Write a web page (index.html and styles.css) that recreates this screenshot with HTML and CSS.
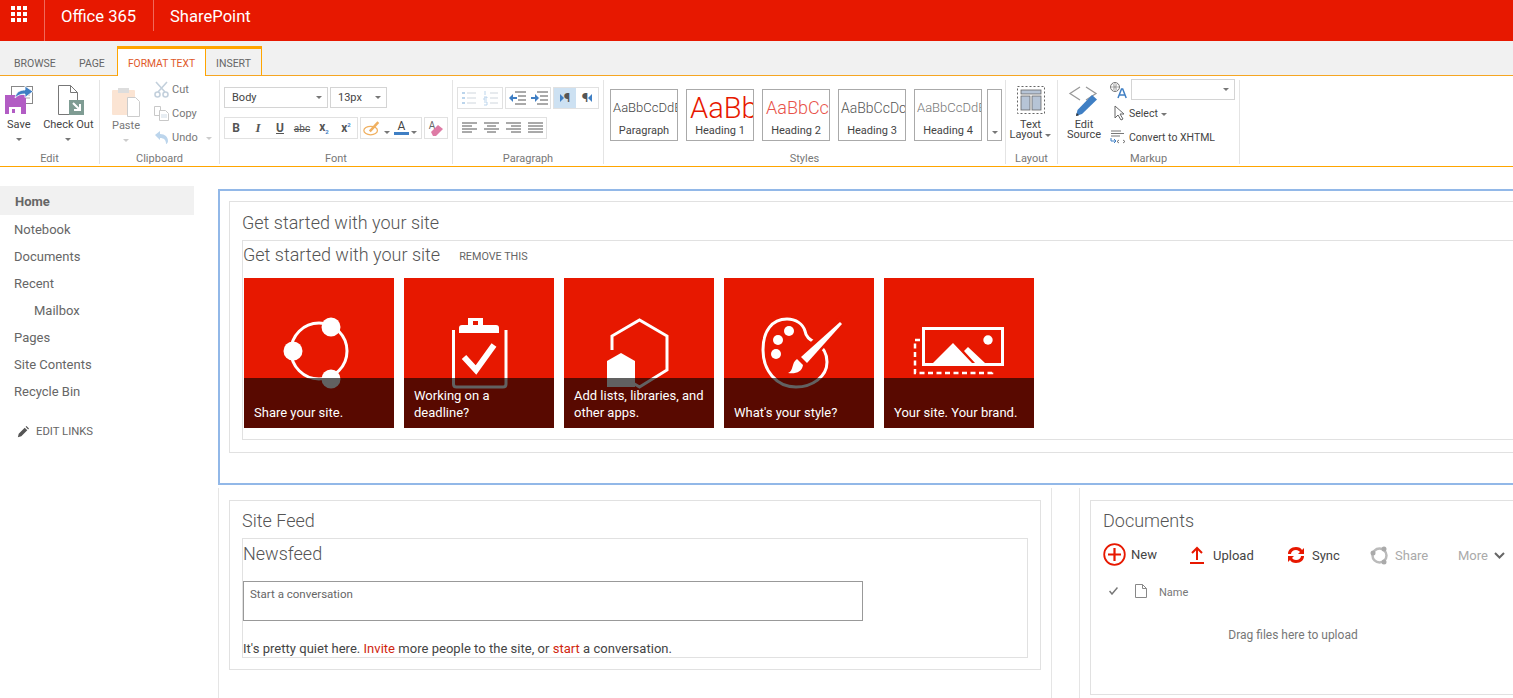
FILE: index.html
```html
<!DOCTYPE html>
<html lang="en">
<head>
    <meta charset="UTF-8">
    <title>Home - Site</title>
    <link rel="stylesheet" href="styles.css">
</head>
<body>
<header class="suite">
    <div class="waffle">
        <svg width="16" height="16" viewBox="0 0 16 16" fill="#fff"><rect x="0" y="0" width="4" height="4"/><rect x="6" y="0" width="4" height="4"/><rect x="12" y="0" width="4" height="4"/><rect x="0" y="6" width="4" height="4"/><rect x="6" y="6" width="4" height="4"/><rect x="12" y="6" width="4" height="4"/><rect x="0" y="12" width="4" height="4"/><rect x="6" y="12" width="4" height="4"/><rect x="12" y="12" width="4" height="4"/></svg>
    </div>
    <div class="suite-item office">Office 365</div>
    <div class="suite-item product">SharePoint</div>
</header>

<nav class="tabs">
    <span class="tab browse">BROWSE</span>
    <span class="tab page-tab">PAGE</span>
    <span class="tab active">FORMAT TEXT</span>
    <span class="tab insert">INSERT</span>
</nav>

<section class="ribbon">
    <div class="group g-edit">
        <div class="group-body">
            <div class="big save">
                <svg width="30" height="30" viewBox="0 0 30 30"><rect x="6.500" y="1.500" width="21" height="17" fill="#fff" stroke="#888"/><path d="M20 7h5M20 10h5M20 13h5" stroke="#aaa"/><path d="M0 10h21v19H0z" fill="#b25cc4"/><rect x="4" y="22" width="12" height="7" fill="#fff"/><rect x="7" y="24" width="3" height="4" fill="#b25cc4"/><path d="M10 13c1-6 5-8 10-8V1l8 5.500-8 6V9c-4 0-7 1-10 4z" fill="#3f7fc4" stroke="#fff" stroke-width=".8"/></svg>
                <span>Save</span><i class="caret"></i>
            </div>
            <div class="big checkout">
                <svg width="28" height="31" viewBox="0 0 28 31"><path d="M1.500 .5h12l7 7v22h-19z" fill="#fff" stroke="#777"/><path d="M13.500 .5v7h7" fill="none" stroke="#777"/><rect x="12" y="15" width="15" height="15" fill="#7f9c93"/><path d="M16 18l7 7M23 19v6h-6" fill="none" stroke="#fff" stroke-width="2"/></svg>
                <span>Check Out</span><i class="caret"></i>
            </div>
        </div>
        <div class="group-label">Edit</div>
    </div>

    <div class="group g-clip">
        <div class="group-body">
            <div class="big paste off">
                <svg width="29" height="32" viewBox="0 0 29 32"><rect x="0" y="4" width="23" height="25" rx="1" fill="#fbe4d3"/><rect x="6" y="2" width="11" height="5" fill="#ddd"/><path d="M15.500 11.500h8l4 4v15h-12z" fill="#fff" stroke="#ccc"/></svg>
                <span>Paste</span><i class="caret"></i>
            </div>
            <div class="small-stack off">
                <div class="small-row"><svg width="15" height="17" viewBox="0 0 15 17" fill="none" stroke="#c3d0dc" stroke-width="1.600"><path d="M2 1l9 10M13 1L4 11"/><circle cx="3.500" cy="13.500" r="2.500"/><circle cx="11.500" cy="13.500" r="2.500"/></svg><span>Cut</span></div>
                <div class="small-row"><svg width="15" height="15" viewBox="0 0 15 15" fill="#fff" stroke="#c8c8c8"><path d="M.5 .5h6v9h-6z"/><path d="M5.500 4.500h6l3 3v7h-9z"/><path d="M7 9h6M7 11h6" stroke="#cfdbe6"/></svg><span>Copy</span></div>
                <div class="small-row"><svg width="15" height="15" viewBox="0 0 15 15"><path d="M1 5l5-4v3c5 0 8 3 8 7 0 1-1 3-2 3 0-4-2-6-6-6v2z" fill="#bcd5ec"/></svg><span>Undo</span><i class="caret light"></i></div>
            </div>
        </div>
        <div class="group-label">Clipboard</div>
    </div>

    <div class="group g-font">
        <div class="rows">
            <div class="tool-row">
                <div class="select sel-style">Body<i class="caret"></i></div>
                <div class="select sel-size">13px<i class="caret"></i></div>
            </div>
            <div class="tool-row">
                <div class="tool-box w134">
                    <b class="fmt">B</b><i class="fmt serif">I</i><u class="fmt">U</u><s class="fmt abc">abc</s>
                    <span class="fmt">x<sub>2</sub></span><span class="fmt">x<sup>2</sup></span>
                </div>
                <div class="tool-box w62">
                    <svg width="22" height="18" viewBox="0 0 22 18" fill="none"><ellipse cx="9" cy="12" rx="8" ry="5" stroke="#f0b060" stroke-width="1.500"/><path d="M8 13L18 2" stroke="#f0b060" stroke-width="3"/></svg><i class="caret tiny"></i>
                    <span class="font-color">A</span><i class="caret tiny"></i>
                </div>
                <div class="tool-box w24">
                    <span class="erase-a">A</span>
                    <svg class="eraser" width="14" height="12" viewBox="0 0 14 12"><path d="M1 8l7-7 5 4-7 7H3z" fill="#de7ba5"/></svg>
                </div>
            </div>
        </div>
        <div class="group-label">Font</div>
    </div>

    <div class="group g-para">
        <div class="rows">
            <div class="tool-row">
                <div class="tool-box w46 off2">
                    <svg width="16" height="16" viewBox="0 0 16 16" fill="none" stroke="#cfd6dd"><path d="M6 3h9M6 8h9M6 13h9"/><path d="M1 3h3M1 8h3M1 13h3" stroke="#bcd5ec" stroke-width="2"/></svg>
                    <svg width="16" height="16" viewBox="0 0 16 16" fill="none" stroke="#cfd6dd"><path d="M7 3h8M7 8h8M7 13h8"/><path d="M2 1v4M1 7h3v1H1v2h3M1 12h3v3H1" stroke="#bcd5ec"/></svg>
                </div>
                <div class="tool-box w46">
                    <svg width="17" height="14" viewBox="0 0 17 14"><path d="M6 1h11M9 5h8M9 9h8M6 13h11" stroke="#555"/><path d="M0 7l4-4v3h4v2H4v3z" fill="#3f7fc4"/></svg>
                    <svg width="17" height="14" viewBox="0 0 17 14"><path d="M6 1h11M9 5h8M9 9h8M6 13h11" stroke="#555"/><path d="M8 7L4 3v3H0v2h4v3z" fill="#3f7fc4"/></svg>
                </div>
                <div class="tool-box w46 dir">
                    <span class="dir-btn on"><em class="tri-r"></em>¶</span>
                    <span class="dir-btn">¶<em class="tri-l"></em></span>
                </div>
            </div>
            <div class="tool-row">
                <div class="tool-box w90">
                    <svg class="align" width="15" height="12" viewBox="0 0 15 12"><path d="M0 1h15M0 4h10M0 7h15M0 10h10"/></svg>
                    <svg class="align" width="15" height="12" viewBox="0 0 15 12"><path d="M0 1h15M3 4h9M0 7h15M3 10h9"/></svg>
                    <svg class="align" width="15" height="12" viewBox="0 0 15 12"><path d="M0 1h15M5 4h10M0 7h15M5 10h10"/></svg>
                    <svg class="align" width="15" height="12" viewBox="0 0 15 12"><path d="M0 1h15M0 4h15M0 7h15M0 10h15"/></svg>
                </div>
            </div>
        </div>
        <div class="group-label">Paragraph</div>
    </div>

    <div class="group g-styles">
        <div class="style-list">
            <div class="style-card"><div class="sample s-para">AaBbCcDdE</div><div class="style-name">Paragraph</div></div>
            <div class="style-card"><div class="sample s-h1">AaBb</div><div class="style-name">Heading 1</div></div>
            <div class="style-card"><div class="sample s-h2">AaBbCc</div><div class="style-name">Heading 2</div></div>
            <div class="style-card"><div class="sample s-h3">AaBbCcDc</div><div class="style-name">Heading 3</div></div>
            <div class="style-card"><div class="sample s-h4">AaBbCcDdE</div><div class="style-name">Heading 4</div></div>
            <div class="style-more"><i class="caret"></i></div>
        </div>
        <div class="group-label">Styles</div>
    </div>

    <div class="group g-layout">
        <div class="group-body center">
            <div class="big layout">
                <svg width="28" height="28" viewBox="0 0 28 28"><rect x=".5" y=".5" width="27" height="27" fill="none" stroke="#666" stroke-dasharray="2 2"/><rect x="4" y="4" width="20" height="4" fill="#b6c4d6" stroke="#666" stroke-width=".8"/><rect x="4" y="10" width="9" height="14" fill="#b6c4d6" stroke="#666" stroke-width=".8"/><rect x="15" y="10" width="9" height="14" fill="#b6c4d6" stroke="#666" stroke-width=".8"/></svg>
                <span class="two-line">Text<br>Layout<i class="caret inline"></i></span>
            </div>
        </div>
        <div class="group-label">Layout</div>
    </div>

    <div class="group g-markup">
        <div class="group-body">
            <div class="big source">
                <svg width="32" height="32" viewBox="0 0 32 32" fill="none"><path d="M12 2L2 8.500l10 6.500M18 2l10 6.500-10 6.500" stroke="#999" stroke-width="1.300"/><path d="M8 31l1.500-6L24 10l5 4.500L14 29z" fill="#3f7fc4"/><path d="M8 31l.7-3 2.300 2.200z" fill="#333"/></svg>
                <span class="two-line">Edit<br>Source</span>
            </div>
            <div class="markup-stack">
                <div class="markup-row first">
                    <svg width="18" height="18" viewBox="0 0 18 18" fill="none"><circle cx="6" cy="6" r="4.500" stroke="#777"/><path d="M1.500 6h9M6 1.500v9M3.500 2.500c2 2 2 5 0 7M8.500 2.500c-2 2-2 5 0 7" stroke="#777" stroke-width=".6"/><path d="M9 17l3.500-9h1.200l3.500 9M10.500 14h5.200" stroke="#3f7fc4" stroke-width="1.500"/></svg>
                    <div class="select sel-lang"><i class="caret"></i></div>
                </div>
                <div class="markup-row second">
                    <svg width="12" height="16" viewBox="0 0 12 16"><path d="M1 1v12l3-3 3 5 2-1-3-5h4z" fill="#fff" stroke="#666"/></svg>
                    <span>Select<i class="caret inline"></i></span>
                </div>
                <div class="markup-row third">
                    <svg width="16" height="15" viewBox="0 0 16 15" fill="none"><path d="M1 1h10M1 3.500h13M1 6h9" stroke="#777"/><path d="M1 8v3h5M4 9l2 2-2 2" stroke="#3f7fc4"/><path d="M9 10l-2 1.500L9 13M13 10l2 1.500-2 1.500" stroke="#555" stroke-width=".8"/></svg>
                    <span>Convert to XHTML</span>
                </div>
            </div>
        </div>
        <div class="group-label">Markup</div>
    </div>
</section>

<div class="page">
    <aside class="sidenav">
        <a class="nav-item current">Home</a>
        <a class="nav-item">Notebook</a>
        <a class="nav-item">Documents</a>
        <a class="nav-item">Recent</a>
        <a class="nav-item sub">Mailbox</a>
        <a class="nav-item">Pages</a>
        <a class="nav-item">Site Contents</a>
        <a class="nav-item">Recycle Bin</a>
        <a class="edit-links">
            <svg width="12" height="12" viewBox="0 0 14 14"><path d="M1 13l1-4 7-7 3 3-7 7zM10 1l1-1 3 3-1 1z" fill="#555"/></svg>
            EDIT LINKS
        </a>
    </aside>

    <main class="content">
        <section class="zone-top">
            <div class="webpart top-part">
                <h2 class="wp-title">Get started with your site</h2>
                <div class="inner-part">
                    <div class="gs-head">
                        <h2 class="gs-title">Get started with your site</h2>
                        <span class="remove">REMOVE THIS</span>
                    </div>
                    <div class="tiles">
                        <div class="tile">
                            <svg class="tile-art" viewBox="0 0 150 150"><circle cx="75" cy="73" r="28" fill="none" stroke="#fff" stroke-width="3"/><circle cx="87" cy="49" r="9.500" fill="#fff"/><circle cx="49" cy="73" r="9.500" fill="#fff"/><circle cx="87" cy="101" r="9.500" fill="#fff"/></svg>
                            <div class="caption">Share your site.</div>
                        </div>
                        <div class="tile">
                            <svg class="tile-art" viewBox="0 0 150 150"><path d="M49.500 52V106q0 3 3 3H99q3 0 3-3V52" fill="none" stroke="#fff" stroke-width="3"/><path d="M55 55v-5q0-3 3-3h6v-7h15v7h13q3 0 3 3v5z" fill="#fff"/><rect x="69" y="43" width="5" height="4" fill="#e71800"/><path d="M60 79l12 13 18-25" fill="none" stroke="#fff" stroke-width="6"/></svg>
                            <div class="caption">Working on a deadline?</div>
                        </div>
                        <div class="tile">
                            <svg class="tile-art" viewBox="0 0 150 150"><path d="M48 72V58l27.500-16L103 58v34l-27.500 17-10-6" fill="none" stroke="#fff" stroke-width="3"/><path d="M57 75l14 8v26H43V83z" fill="#fff"/></svg>
                            <div class="caption">Add lists, libraries, and other apps.</div>
                        </div>
                        <div class="tile">
                            <svg class="tile-art" viewBox="0 0 150 150"><path d="M63 41C72 41 79 46 81 53 82 60 87 62 92 65 99 69 103 75 103 84 103 99 88 109 72 109 52 109 39 92 39 72 39 53 48 41 63 41z" fill="#e71800" stroke="#fff" stroke-width="3"/><circle cx="65" cy="53" r="5" fill="#fff"/><circle cx="54" cy="62" r="5" fill="#fff"/><circle cx="52" cy="76" r="5" fill="#fff"/><path d="M115 42l3 4-35 39-8-7z" fill="#e71800" stroke="#e71800" stroke-width="5"/><path d="M116 44l2 2-35 39-6-6z" fill="#fff"/><path d="M64 95c6-2 3-10 9-14l6 6c-1 7-7 9-15 8z" fill="#fff"/></svg>
                            <div class="caption">What's your style?</div>
                        </div>
                        <div class="tile">
                            <svg class="tile-art" viewBox="0 0 150 150"><rect x="39.500" y="50.500" width="79" height="36" fill="none" stroke="#fff" stroke-width="3"/><circle cx="104" cy="62" r="4.700" fill="#fff"/><path d="M49 85l20-20 19 20zM84 69l17 16H91L80 73z" fill="#fff"/><path d="M36 62h-5v33h77v-3" fill="none" stroke="#fff" stroke-width="2.500" stroke-dasharray="5 3.500"/></svg>
                            <div class="caption">Your site. Your brand.</div>
                        </div>
                    </div>
                </div>
            </div>
        </section>

        <div class="zones-bottom">
            <section class="zone-left">
                <div class="webpart feed-part">
                    <h2 class="wp-title feed-title">Site Feed</h2>
                    <div class="inner-part feed-inner">
                        <h2 class="gs-title newsfeed">Newsfeed</h2>
                        <div class="convo">Start a conversation</div>
                        <p class="quiet">It's pretty quiet here. <a>Invite</a> more people to the site, or <a>start</a> a conversation.</p>
                    </div>
                </div>
            </section>
            <section class="zone-right">
                <div class="webpart docs-part">
                    <h2 class="wp-title docs-title">Documents</h2>
                    <div class="doc-actions">
                        <span class="doc-act act-new">
                            <svg width="23" height="23" viewBox="0 0 23 23" fill="none" stroke="#e71800"><circle cx="11.500" cy="11.500" r="10.300" stroke-width="1.800"/><path d="M11.500 5v13M5 11.500h13" stroke-width="2.200"/></svg>New
                        </span>
                        <span class="doc-act act-upload">
                            <svg width="14" height="18" viewBox="0 0 14 18" fill="none" stroke="#e71800" stroke-width="2"><path d="M7 14V2M2 7l5-5 5 5"/><path d="M0 17h14"/></svg>Upload
                        </span>
                        <span class="doc-act act-sync">
                            <svg width="18" height="18" viewBox="0 0 18 18" fill="#e71800"><path d="M1 8c0-4 3-7 8-7 3 0 5 1 6 3l2-2v6h-6l2-2c-1-1-2-2-4-2-3 0-5 2-5 4z"/><path d="M17 10c0 4-3 7-8 7-3 0-5-1-6-3l-2 2v-6h6l-2 2c1 1 2 2 4 2 3 0 5-2 5-4z"/></svg>Sync
                        </span>
                        <span class="doc-act act-share">
                            <svg width="19" height="19" viewBox="0 0 19 19" fill="none"><circle cx="9.500" cy="9.500" r="7" stroke="#bbb" stroke-width="2.500"/><circle cx="14" cy="3" r="2.500" fill="#aaa"/><circle cx="3" cy="7" r="2.500" fill="#aaa"/><circle cx="14" cy="16" r="2.500" fill="#aaa"/></svg>Share
                        </span>
                        <span class="doc-act act-more">More
                            <svg width="11" height="7" viewBox="0 0 11 7" fill="none" stroke="#666" stroke-width="2"><path d="M1 1l4.500 4.500L10 1"/></svg>
                        </span>
                    </div>
                    <div class="doc-head">
                        <svg width="9" height="8" viewBox="0 0 9 8" fill="none" stroke="#777" stroke-width="1.500"><path d="M.5 4l2.500 3L8.500 .5"/></svg>
                        <svg class="doc-icon" width="12" height="14" viewBox="0 0 12 14" fill="#fff" stroke="#888"><path d="M.5 .5h7l4 4v9h-11z"/><path d="M7.500 .5v4h4" fill="none"/></svg>
                        <span class="doc-name">Name</span>
                    </div>
                    <div class="drag">Drag files here to upload</div>
                </div>
            </section>
        </div>
    </main>
</div>
</body>
</html>
```

FILE: styles.css
```css
* {
    box-sizing: border-box;
}
html, body {
    margin: 0;
    height: 100%;
}
body {
    font-family: Roboto, "Open Sans", sans-serif;
    font-size: 13px;
    color: #444;
    background: #fff;
    overflow: hidden;
}
h2, p {
    margin: 0;
    font-weight: 300;
}

/* suite bar */
.suite {
    display: flex;
    height: 41px;
    background: #e71800;
    color: #fff;
}
.waffle {
    width: 45px;
    padding: 6px 0 0 11px;
    border-right: 1px solid #f0695a;
}
.suite-item {
    font-size: 16.600px;
    line-height: 33px;
    padding: 0 16px;
    height: 31px;
}
.office {
    width: 109px;
    border-right: 1px solid #f0695a;
}

/* tabs */
.tabs {
    display: flex;
    align-items: flex-end;
    height: 35px;
    background: #f1f1f1;
    border-bottom: 1px solid #f5a623;
}
.tab {
    height: 30px;
    line-height: 38px;
    font-size: 10.500px;
    color: #666;
    padding: 0 11px;
}
.browse {
    padding-left: 14px;
    width: 68px;
}
.page-tab {
    width: 49px;
}
.tab.active {
    width: 89px;
    padding: 0;
    text-align: center;
    font-size: 10.300px;
    color: #e0592a;
    background: #fff;
    border: 1px solid #ffa500;
    border-top-width: 3px;
    border-bottom: 0;
    line-height: 30px;
    position: relative;
    margin-bottom: -1px;
    height: 30px;
}
.tab.insert {
    width: 56px;
    height: 29px;
    padding: 0;
    text-align: center;
    border-right: 1px solid #ffa500;
    border-top: 3px solid #ffa500;
    line-height: 30px;
}

/* ribbon */
.ribbon {
    display: flex;
    height: 91px;
    padding-top: 4px;
    border-bottom: 1px solid #ffa500;
    font-size: 11px;
}
.group {
    display: flex;
    flex-direction: column;
    border-right: 1px solid #e4e4e4;
    height: 84px;
}
.group-body {
    display: flex;
    flex: 1;
    min-height: 0;
}
.group-label {
    flex: none;
    text-align: center;
    color: #777;
    font-size: 11px;
    line-height: 14px;
    height: 12px;
}
.g-edit { width: 100px; }
.g-clip { width: 120px; }
.g-font { width: 233px; }
.g-para { width: 151px; }
.g-styles { width: 402px; }
.g-layout { width: 52px; }
.g-markup { width: 182px; }

.big {
    display: flex;
    flex-direction: column;
    align-items: center;
    text-align: center;
    line-height: 10px;
}
.big span {
    margin: 5px 0 8px;
}
.save {
    width: 38px;
    padding-top: 5px;
}
.save svg {
    margin-left: 3px;
}
.checkout {
    width: 62px;
    padding-top: 5px;
}
.checkout svg {
    margin-left: 6px;
}
.checkout span {
    margin-top: 4px;
}
.caret {
    display: inline-block;
    width: 0;
    height: 0;
    border: 3px solid transparent;
    border-top: 3px solid #777;
    border-bottom: 0;
}
.caret.light {
    border-top-color: #ccc;
    margin-left: 5px;
    margin-top: 3px;
}
.caret.tiny {
    margin: 8px 4px 0 2px;
}
.caret.inline {
    margin-left: 3px;
    vertical-align: 1px;
}
.off {
    color: #777;
}
.paste {
    width: 50px;
    margin-left: 1px;
    padding: 6px 0 0 0;
}
.paste .caret {
    border-top-color: #ccc;
}
.paste span {
    margin-top: 3px;
}
.small-stack {
    margin-top: -3px;
    padding-left: 3px;
}
.small-row {
    display: flex;
    align-items: center;
    gap: 3px;
    height: 24px;
}
.small-row svg {
    flex: none;
}

/* font and paragraph tools */
.rows {
    display: flex;
    flex-direction: column;
    flex: 1;
    min-height: 0;
    gap: 8px;
    padding: 7px 0 0 4px;
}
.tool-row {
    display: flex;
    gap: 2px;
    height: 22px;
}
.select {
    display: flex;
    align-items: center;
    justify-content: space-between;
    height: 21px;
    padding: 0 5px 0 7px;
    border: 1px solid #d4d4d4;
    font-size: 11px;
    color: #444;
}
.sel-style { width: 104px; }
.sel-size { width: 57px; }
.tool-box {
    display: flex;
    align-items: center;
    justify-content: space-around;
    height: 22px;
    border: 1px solid #e1e1e1;
}
.w134 { width: 134px; }
.w62 { width: 62px; justify-content: flex-start; padding-left: 2px; }
.w24 { width: 24px; position: relative; }
.w46 { width: 46px; }
.w90 { width: 90px; }
.fmt {
    font-size: 12px;
    font-weight: 700;
    color: #555;
    width: 22px;
    text-align: center;
}
.fmt.serif {
    font-family: "Liberation Serif", serif;
    font-size: 13px;
}
.fmt.abc {
    font-size: 10px;
    font-weight: 400;
}
.fmt sub, .fmt sup {
    font-size: 6px;
    color: #3f7fc4;
}
.font-color {
    width: 18px;
    font-size: 12px;
    line-height: 11px;
    text-align: center;
    border-bottom: 3px solid #3f7fc4;
    color: #444;
}
.erase-a {
    font-size: 10px;
    color: #666;
    margin: -5px 0 0 -8px;
}
.eraser {
    position: absolute;
    right: 3px;
    top: 6px;
}
.align {
    stroke: #555;
    stroke-width: 1;
    fill: none;
}
.dir {
    padding: 0;
    justify-content: flex-start;
}
.dir-btn {
    flex: 1;
    height: 100%;
    text-align: center;
    font-size: 13px;
    font-weight: 700;
    line-height: 20px;
    color: #555;
}
.dir-btn.on {
    background: #cde1f2;
}
.tri-r, .tri-l {
    display: inline-block;
    width: 0;
    height: 0;
    border: 4px solid transparent;
    vertical-align: 0;
}
.tri-r {
    border-left-color: #3f7fc4;
    border-right: 0;
}
.tri-l {
    border-right-color: #3f7fc4;
    border-left: 0;
}

/* style gallery */
.style-list {
    display: flex;
    flex: 1;
    min-height: 0;
    gap: 8px;
    padding: 9px 0 0 6px;
    align-items: flex-start;
}
.style-card {
    width: 68px;
    height: 52px;
    border: 1px solid #aaa;
    overflow: hidden;
    text-align: center;
}
.sample {
    height: 32px;
    line-height: 36px;
    white-space: nowrap;
    font-weight: 300;
    text-align: left;
    padding-left: 2px;
    font-size: 13px;
}
.s-h1 { font-size: 29px; color: #e71800; line-height: 36px; padding-left: 3px; }
.s-h2 { font-size: 18px; color: #e8524a; padding-left: 3px; }
.s-h3 { font-size: 14px; color: #555; }
.s-h4 { font-size: 13px; color: #777; }
.style-name {
    font-size: 11px;
    line-height: 14px;
    margin-top: 2px;
}
.style-more {
    display: flex;
    align-items: flex-end;
    justify-content: center;
    width: 15px;
    height: 52px;
    margin-left: -3px;
    padding-bottom: 6px;
    border: 1px solid #aaa;
}

/* layout and markup */
.g-layout .big {
    width: 100%;
    padding: 6px 2px 0 0;
}
.g-layout .big span {
    margin-top: 6px;
}
.two-line {
    line-height: 10px;
}
.source {
    width: 50px;
    margin-left: 1px;
    padding-top: 5px;
}
.source .two-line {
    margin-top: 3px;
}
.markup-row {
    display: flex;
    align-items: center;
    gap: 4px;
    font-size: 10.500px;
}
.first {
    gap: 4px;
    height: 21px;
    margin-top: -1px;
}
.second {
    gap: 3px;
    margin: 4px 0 0 5px;
    height: 18px;
}
.third {
    gap: 3px;
    margin: 6px 0 0 1px;
    height: 18px;
}
.sel-lang {
    width: 104px;
    justify-content: flex-end;
}

/* page */
.page {
    display: flex;
}
.sidenav {
    flex: none;
    width: 218px;
    padding-top: 19px;
}
.nav-item {
    display: block;
    height: 27px;
    line-height: 28px;
    padding-left: 14px;
    width: 194px;
    color: #666;
}
.nav-item.current {
    height: 29px;
    line-height: 32px;
    padding-left: 15px;
    background: #f1f1f1;
    font-weight: 700;
    margin-bottom: 1px;
}
.nav-item.sub {
    padding-left: 34px;
}
.edit-links {
    display: flex;
    align-items: center;
    gap: 7px;
    margin: 20px 0 0 17px;
    font-size: 11.300px;
    color: #666;
}
.content {
    flex: 1;
    min-width: 0;
    padding-top: 22px;
}
.zone-top {
    height: 296px;
    margin-right: -20px;
    padding: 10px 0 0 9px;
    border: 2px solid #92b8e8;
}
.webpart {
    border: 1px solid #e1e1e1;
}
.top-part {
    height: 252px;
    padding: 9px 0 0 12px;
}
.wp-title {
    font-size: 18px;
    line-height: 24px;
    color: #555;
}
.inner-part {
    border: 1px solid #e1e1e1;
    border-right: 0;
    margin-top: 5px;
}
.gs-head {
    display: flex;
    align-items: flex-start;
    height: 37px;
}
.gs-title {
    font-size: 18px;
    line-height: 28px;
    color: #555;
}
.remove {
    margin: 9px 0 0 19px;
    line-height: 14px;
    font-size: 10.800px;
    color: #666;
}
.tiles {
    display: flex;
    gap: 10px;
    padding: 0 0 11px 1px;
}
.tile {
    position: relative;
    width: 150px;
    height: 150px;
    background: #e71800;
    color: #fff;
}
.tile-art {
    display: block;
    width: 150px;
    height: 150px;
}
.caption {
    position: absolute;
    left: 0;
    right: 0;
    bottom: 0;
    display: flex;
    align-items: flex-end;
    height: 50px;
    padding: 0 10px 7px;
    line-height: 17px;
    background: rgba(0, 0, 0, 0.62);
}

/* bottom zones */
.zones-bottom {
    display: flex;
    margin-top: 3px;
    height: 211px;
}
.zone-left {
    width: 834px;
    padding: 12px 10px 0;
    border-left: 1px solid #e5e5e5;
    border-right: 1px solid #e5e5e5;
}
.feed-part {
    height: 170px;
    padding: 8px 12px 0;
}
.feed-inner {
    height: 120px;
    border-right: 1px solid #e1e1e1;
}
.newsfeed {
    line-height: 30px;
}
.convo {
    width: 620px;
    height: 40px;
    margin-top: 12px;
    padding: 5px 6px;
    font-size: 11.500px;
    line-height: 14px;
    border: 1px solid #999;
    color: #666;
}
.quiet {
    margin-top: 19px;
    font-weight: 400;
    line-height: 17px;
    letter-spacing: .03px;
}
.quiet a {
    color: #d0260f;
}
.zone-right {
    flex: 1;
    margin-left: 27px;
    margin-right: -20px;
    padding: 12px 0 0 10px;
    border-left: 1px solid #e5e5e5;
}
.docs-part {
    height: 195px;
    padding: 8px 12px 0;
}
.doc-actions {
    display: flex;
    height: 24px;
    margin-top: 9px;
    align-items: center;
}
.doc-act {
    display: flex;
    align-items: center;
    white-space: nowrap;
}
.act-new { width: 87px; gap: 5px; }
.act-upload { width: 97px; gap: 9px; margin-top: 2px; }
.act-sync { width: 83px; gap: 7px; margin-top: 2px; }
.act-share { width: 88px; gap: 6px; margin-top: 2px; color: #aaa; }
.act-more { gap: 6px; margin-top: 2px; color: #aaa; }
.doc-head {
    display: flex;
    align-items: center;
    margin: 16px 0 0 6px;
    font-size: 11px;
    color: #777;
}
.doc-icon {
    margin: 0 12px 0 17px;
}
.doc-name {
    padding-top: 4px;
}
.drag {
    margin-top: 29px;
    width: 380px;
    text-align: center;
    font-size: 12px;
    color: #777;
}
```
